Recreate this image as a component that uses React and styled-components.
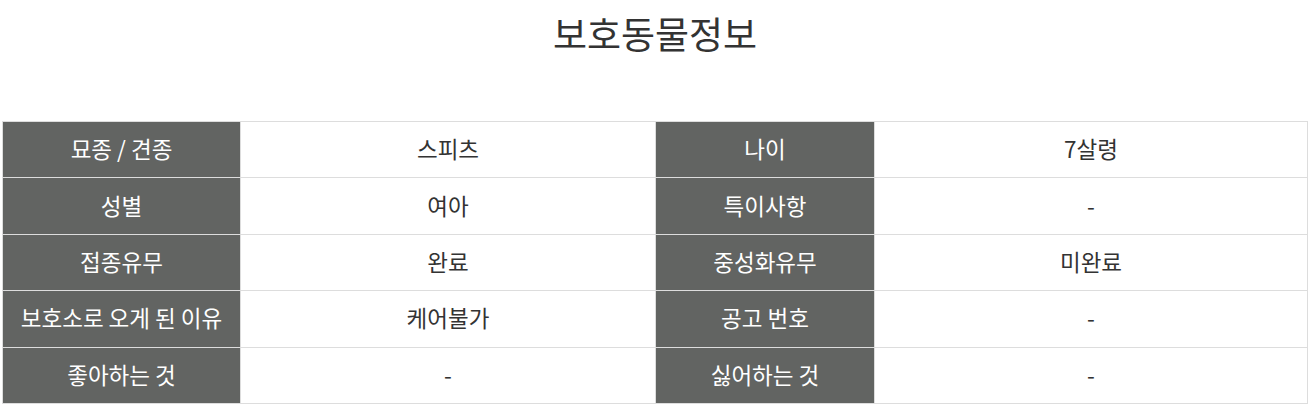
import styled, { createGlobalStyle } from "styled-components";

const GlobalStyle = createGlobalStyle`
  body {
    margin: 0;
    background: #fff;
    font-family: "Noto Sans CJK KR", "Noto Sans", sans-serif;
  }
`;

// 보호동물 정보 (두 쌍씩 한 줄)
const rows = [
  ["묘종 / 견종", "스피츠", "나이", "7살령"],
  ["성별", "여아", "특이사항", "-"],
  ["접종유무", "완료", "중성화유무", "미완료"],
  ["보호소로 오게 된 이유", "케어불가", "공고 번호", "-"],
  ["좋아하는 것", "-", "싫어하는 것", "-"],
];

const colWidths = [238, 415, 219, 433];

const App = () => {
  return (
    <Page>
      <GlobalStyle />
      <Title>보호동물정보</Title>
      <InfoTable>
        <colgroup>
          {colWidths.map((w, i) => (
            <Col key={i} $width={w} />
          ))}
        </colgroup>
        <tbody>
          {rows.map((row) => (
            <tr key={row[0]}>
              <HeadCell>{row[0]}</HeadCell>
              <ValueCell>{row[1]}</ValueCell>
              <HeadCell>{row[2]}</HeadCell>
              <ValueCell>{row[3]}</ValueCell>
            </tr>
          ))}
        </tbody>
      </InfoTable>
    </Page>
  );
};
export default App;

const Page = styled.div`
  width: 1310px;
  padding-top: 7px;
`;

const Title = styled.h2`
  margin: 0 0 62px;
  text-align: center;
  font-size: 37px;
  font-weight: 400;
  line-height: 52px;
  color: #333;
`;

const InfoTable = styled.table`
  margin-left: 2px;
  width: 1305px;
  table-layout: fixed;
  border-collapse: collapse;
  border: 1px solid #ddd;
`;

const Col = styled.col`
  width: ${(p) => p.$width}px;
`;

const Cell = styled.td`
  height: 52.4px;
  padding: 0 0 3px;
  border: 1px solid #ddd;
  font-size: 22.5px;
  text-align: center;
  white-space: nowrap;
`;

const HeadCell = styled(Cell)`
  background: #626462;
  color: #fff;
`;

const ValueCell = styled(Cell)`
  color: #333;
`;
